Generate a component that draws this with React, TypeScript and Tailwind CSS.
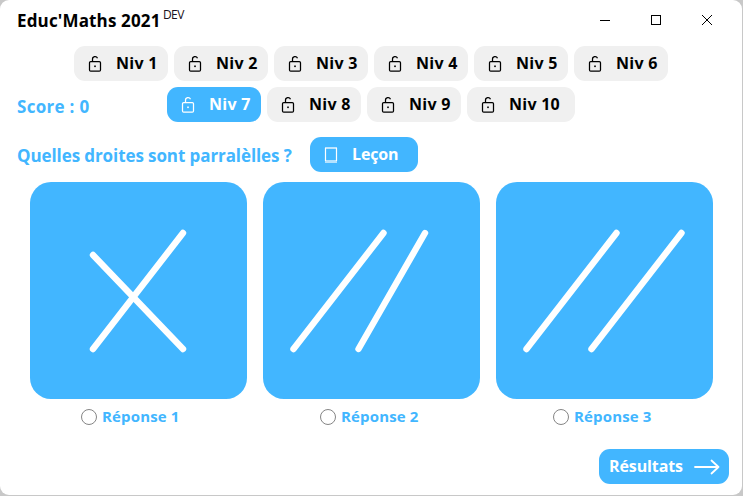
import React from "react";

type Line = [number, number, number, number];

function LockIcon() {
  return (
    <svg width="14" height="18" viewBox="0 0 14 18" fill="none" stroke="currentColor" strokeWidth="1.25" className="shrink-0">
      <rect x="1.5" y="6.5" width="11" height="9.6" rx="1.2" />
      <path d="M4.5 6.5V4.3A2.6 2.6 0 0 1 9.5 3.2" />
      <rect x="6.2" y="10.5" width="1.6" height="1.6" fill="currentColor" stroke="none" />
    </svg>
  );
}

function Level({ n, active = false, wide = false }: { n: number; active?: boolean; wide?: boolean }) {
  return (
    <button
      className={`flex h-[35px] items-center rounded-[11px] pl-[14px] ${wide ? "w-[108px]" : "w-[94px]"} ${
        active ? "bg-[#42b6ff] text-white" : "bg-[#f0f0f0] text-black"
      }`}
    >
      <LockIcon />
      <span className="ml-[14px] text-[16px] leading-[35px] font-bold tracking-[0.25px] whitespace-nowrap">Niv {n}</span>
    </button>
  );
}

function Card({ lines }: { lines: Line[] }) {
  return (
    <div className="h-[217px] w-[217px] rounded-[21px] bg-[#42b6ff]">
      <svg width="217" height="217" viewBox="0 0 217 217" stroke="white" strokeWidth="6.4" strokeLinecap="round">
        {lines.map(([x1, y1, x2, y2], i) => (
          <line key={i} x1={x1} y1={y1} x2={x2} y2={y2} />
        ))}
      </svg>
    </div>
  );
}

function Answer({ n }: { n: number }) {
  return (
    <label className="flex items-center gap-[5px] text-[15px] leading-[20px] font-bold text-[#42b6ff]">
      <span className="h-4 w-4 rounded-full border border-[#858585] bg-white" />
      <span className="-mt-[2px] tracking-[0.15px] whitespace-nowrap">Réponse {n}</span>
    </label>
  );
}

export default function App() {
  return (
    <div className="h-[496px] w-[743px] overflow-hidden bg-[#c8c8c8] pr-px pb-px font-['Open_Sans','Noto_Sans',sans-serif]">
      <div className="flex h-[495px] w-[742px] flex-col overflow-hidden rounded-[9px] bg-white">
        <header className="flex h-[46px] items-start pl-[17px]">
          <h1 className="w-[146px] pt-[9px] text-[17px] leading-[24px] font-bold tracking-[0.15px] whitespace-nowrap text-black">Educ'Maths 2021</h1>
          <span className="pt-[6px] text-[12px] leading-[18px] tracking-[-0.6px] text-[#181020]">DEV</span>
          <div className="mr-[29px] ml-auto flex pt-[14px] text-black">
            <svg className="mr-[39px]" width="12" height="12" stroke="currentColor" fill="none"><path d="M1 6.5h10" /></svg>
            <svg className="mr-[39px]" width="12" height="12" stroke="currentColor" fill="none"><rect x="1.5" y="1.5" width="9" height="9" /></svg>
            <svg width="12" height="12" stroke="currentColor" fill="none"><path d="M1 1l10 10M11 1L1 11" /></svg>
          </div>
        </header>

        <div className="flex h-[41px] gap-[6px] pl-[74px]">
          {[1, 2, 3, 4, 5, 6].map((n) => <Level key={n} n={n} />)}
        </div>
        <div className="flex h-[50px] items-start pl-[17px]">
          <span className="w-[150px] pt-[8px] text-[17px] leading-[24px] font-bold tracking-[0.3px] text-[#42b6ff]">Score : 0</span>
          <div className="flex gap-[6px]">
            <Level n={7} active />
            <Level n={8} />
            <Level n={9} />
            <Level n={10} wide />
          </div>
        </div>

        <div className="flex h-[45px] items-start pl-[17px]">
          <span className="w-[293px] pt-[7px] text-[17px] leading-[24px] font-bold tracking-[-0.09px] whitespace-nowrap text-[#42b6ff]">
            Quelles droites sont parralèlles ?
          </span>
          <button className="flex h-[35px] w-[108px] items-center rounded-[11px] bg-[#42b6ff] pl-[14px] text-white">
            <svg width="14" height="16" viewBox="0 0 14 16" fill="none" className="shrink-0">
              <path d="M1.5 1v13M12.5 1v13" stroke="white" strokeWidth="1.2" />
              <path d="M1 1h12" stroke="white" strokeOpacity=".65" strokeWidth="2" />
              <path d="M1 14.5h12" stroke="white" strokeOpacity=".6" strokeWidth="3" />
            </svg>
            <span className="ml-[14px] text-[16px] leading-[35px] font-bold tracking-[-0.15px]">Leçon</span>
          </button>
        </div>

        <main className="flex gap-4 pl-[30px]">
          <Card lines={[[63, 73, 153, 167], [153, 51, 63, 167]]} />
          <Card lines={[[120.5, 51, 30.5, 167], [162, 51, 95.5, 167]]} />
          <Card lines={[[120.5, 51, 30.5, 167], [185.5, 51, 95.5, 167]]} />
        </main>
        <div className="flex h-[50px] items-start pt-[9px]">
          <div className="w-[239px] pl-[81px]"><Answer n={1} /></div>
          <div className="w-[233px] pl-[81px]"><Answer n={2} /></div>
          <div className="pl-[81px]"><Answer n={3} /></div>
        </div>

        <footer className="flex justify-end pr-[13px]">
          <button className="flex h-[35px] w-[130px] items-center rounded-[11px] bg-[#42b6ff] pl-[10px] text-white">
            <span className="w-[85px] text-left text-[16px] leading-[35px] font-bold tracking-[-0.1px] whitespace-nowrap">Résultats</span>
            <svg width="28" height="18" viewBox="0 0 28 18" fill="none" stroke="white" strokeWidth="1.8" strokeLinecap="round" strokeLinejoin="round">
              <path d="M1 9h23.5M17.5 2.5L24.5 9L17.5 15.5" />
            </svg>
          </button>
        </footer>
      </div>
    </div>
  );
}
